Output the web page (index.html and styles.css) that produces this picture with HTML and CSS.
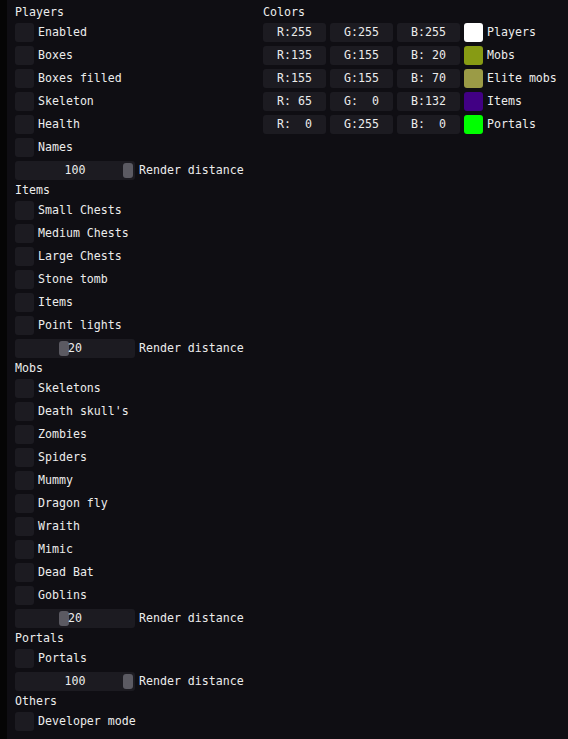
FILE: index.html
```html
<!DOCTYPE html>
<html>
<head>
<meta charset="utf-8">
<link rel="stylesheet" href="styles.css">
</head>
<body>
<div class="window">
  <div class="col left">
    <div class="hdr">Players</div>
    <div class="cb"><span class="box"></span><span class="lbl">Enabled</span></div>
    <div class="cb"><span class="box"></span><span class="lbl">Boxes</span></div>
    <div class="cb"><span class="box"></span><span class="lbl">Boxes filled</span></div>
    <div class="cb"><span class="box"></span><span class="lbl">Skeleton</span></div>
    <div class="cb"><span class="box"></span><span class="lbl">Health</span></div>
    <div class="cb"><span class="box"></span><span class="lbl">Names</span></div>
    <div class="sl"><div class="slider"><span class="grab" style="left:108px"></span><span class="val">100</span></div><span class="lbl">Render distance</span></div>

    <div class="hdr">Items</div>
    <div class="cb"><span class="box"></span><span class="lbl">Small Chests</span></div>
    <div class="cb"><span class="box"></span><span class="lbl">Medium Chests</span></div>
    <div class="cb"><span class="box"></span><span class="lbl">Large Chests</span></div>
    <div class="cb"><span class="box"></span><span class="lbl">Stone tomb</span></div>
    <div class="cb"><span class="box"></span><span class="lbl">Items</span></div>
    <div class="cb"><span class="box"></span><span class="lbl">Point lights</span></div>
    <div class="sl"><div class="slider"><span class="grab" style="left:44px"></span><span class="val">20</span></div><span class="lbl">Render distance</span></div>

    <div class="hdr">Mobs</div>
    <div class="cb"><span class="box"></span><span class="lbl">Skeletons</span></div>
    <div class="cb"><span class="box"></span><span class="lbl">Death skull's</span></div>
    <div class="cb"><span class="box"></span><span class="lbl">Zombies</span></div>
    <div class="cb"><span class="box"></span><span class="lbl">Spiders</span></div>
    <div class="cb"><span class="box"></span><span class="lbl">Mummy</span></div>
    <div class="cb"><span class="box"></span><span class="lbl">Dragon fly</span></div>
    <div class="cb"><span class="box"></span><span class="lbl">Wraith</span></div>
    <div class="cb"><span class="box"></span><span class="lbl">Mimic</span></div>
    <div class="cb"><span class="box"></span><span class="lbl">Dead Bat</span></div>
    <div class="cb"><span class="box"></span><span class="lbl">Goblins</span></div>
    <div class="sl"><div class="slider"><span class="grab" style="left:44px"></span><span class="val">20</span></div><span class="lbl">Render distance</span></div>

    <div class="hdr">Portals</div>
    <div class="cb"><span class="box"></span><span class="lbl">Portals</span></div>
    <div class="sl"><div class="slider"><span class="grab" style="left:108px"></span><span class="val">100</span></div><span class="lbl">Render distance</span></div>

    <div class="hdr">Others</div>
    <div class="cb"><span class="box"></span><span class="lbl">Developer mode</span></div>
  </div>

  <div class="col right">
    <div class="hdr">Colors</div>
    <div class="crow"><span class="inp">R:255</span><span class="inp">G:255</span><span class="inp">B:255</span><span class="sw" style="background:rgb(255,255,255)"></span><span class="lbl">Players</span></div>
    <div class="crow"><span class="inp">R:135</span><span class="inp">G:155</span><span class="inp">B: 20</span><span class="sw" style="background:rgb(135,155,20)"></span><span class="lbl">Mobs</span></div>
    <div class="crow"><span class="inp">R:155</span><span class="inp">G:155</span><span class="inp">B: 70</span><span class="sw" style="background:rgb(155,155,70)"></span><span class="lbl">Elite mobs</span></div>
    <div class="crow"><span class="inp">R: 65</span><span class="inp">G:  0</span><span class="inp">B:132</span><span class="sw" style="background:rgb(65,0,132)"></span><span class="lbl">Items</span></div>
    <div class="crow"><span class="inp">R:  0</span><span class="inp">G:255</span><span class="inp">B:  0</span><span class="sw" style="background:rgb(0,255,0)"></span><span class="lbl">Portals</span></div>
  </div>
</div>
</body>
</html>
```

FILE: styles.css
```css
html, body {
  margin: 0;
  padding: 0;
  background: #050505;
  height: 100%;
}
.window {
  margin-left: 7px;
  height: 739px;
  box-sizing: border-box;
  background: #0f0e13;
  padding: 6px 8px 0 8px;
  display: flex;
  font-family: "DejaVu Sans Mono", "Liberation Mono", monospace;
  font-size: 11.6px;
  color: #ececec;
  white-space: pre;
}
.col {
  display: flex;
  flex-direction: column;
  gap: 4px;
}
.left {
  width: 248px;
}
.hdr {
  height: 13px;
  line-height: 13px;
}
.cb, .sl, .crow {
  display: flex;
  align-items: center;
  gap: 4px;
  height: 19px;
  line-height: 19px;
}
.box {
  width: 19px;
  height: 19px;
  border-radius: 3px;
  background: #1c1b21;
}
.slider {
  position: relative;
  width: 120px;
  height: 19px;
  border-radius: 3px;
  background: #1c1b21;
  text-align: center;
}
.grab {
  position: absolute;
  top: 2px;
  width: 10px;
  height: 15px;
  border-radius: 3px;
  background: #5b5a62;
}
.val {
  position: relative;
}
.inp {
  width: 63px;
  height: 19px;
  border-radius: 3px;
  background: #1c1b21;
  text-align: center;
}
.sw {
  width: 19px;
  height: 19px;
  border-radius: 3px;
}
```
